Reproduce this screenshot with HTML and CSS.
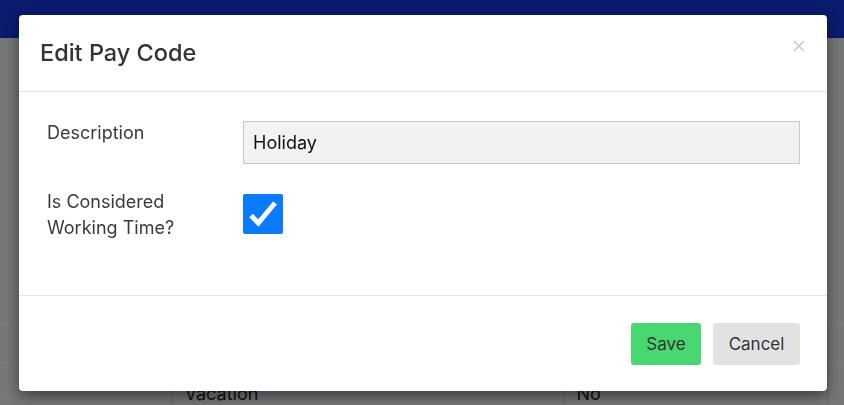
FILE: index.html
```html
<!DOCTYPE html>
<html lang="en">
<head>
    <meta charset="UTF-8">
    <meta name="viewport" content="width=device-width, initial-scale=1.0">
    <title>Pay Codes</title>
    <link rel="stylesheet" href="styles.css">
</head>
<body>
    <div class="topbar"></div>

    <div class="page">
        <table class="codes-table">
            <colgroup>
                <col class="col-spacer">
                <col class="col-name">
                <col class="col-working">
                <col>
            </colgroup>
            <tbody>
                <tr><td></td><td>Holiday</td><td>Yes</td><td></td></tr>
                <tr class="last-row"><td></td><td>Vacation</td><td>No</td><td></td></tr>
            </tbody>
        </table>
    </div>

    <div class="backdrop">
        <div class="modal">
            <div class="modal-header">
                <h2>Edit Pay Code</h2>
                <button class="close-btn" aria-label="Close">
                    <svg width="12" height="12" viewBox="0 0 12 12">
                        <path d="M1 1 L11 11 M11 1 L1 11" stroke="#c9c9c9" stroke-width="1.6" fill="none"/>
                    </svg>
                </button>
            </div>

            <div class="modal-body">
                <div class="form-row">
                    <label for="description">Description</label>
                    <input type="text" id="description" class="text-input" value="Holiday">
                </div>
                <div class="form-row">
                    <label>Is Considered<br>Working Time?</label>
                    <span class="checkbox checked">
                        <svg width="40" height="40" viewBox="0 0 40 40">
                            <path d="M8 21.5 L15.3 29 L32 9" stroke="#fff" stroke-width="5" fill="none"/>
                        </svg>
                    </span>
                </div>
            </div>

            <div class="modal-footer">
                <button class="btn btn-save">Save</button>
                <button class="btn btn-cancel">Cancel</button>
            </div>
        </div>
    </div>
</body>
</html>
```

FILE: styles.css
```css
* {
    margin: 0;
    padding: 0;
    box-sizing: border-box;
    font-family: Inter, Roboto, "Liberation Sans", sans-serif;
}

body {
    background-color: #efefef;
    height: 405px;
    overflow: hidden;
}

.topbar {
    height: 38px;
    background-color: #1636dc;
}

.page {
    padding-top: 285px;
}

.codes-table {
    width: 100%;
    table-layout: fixed;
    border-collapse: collapse;
    font-size: 18px;
    color: #222;
}

.col-spacer {
    width: 171px;
}

.col-name {
    width: 392px;
}

.col-working {
    width: 264px;
}

.codes-table td {
    height: 39px;
    padding: 0 13px;
    border-top: 1px solid #ffffff;
    border-left: 1px solid #cfcfcf;
    vertical-align: middle;
}

.codes-table td:first-child {
    border-left: none;
}

.codes-table .last-row td {
    vertical-align: top;
    padding-top: 20px;
    height: 60px;
}

.backdrop {
    position: fixed;
    inset: 0;
    background-color: rgba(0, 0, 0, 0.5);
    padding-top: 15px;
}

.modal {
    width: 808px;
    margin-left: 19px;
    background-color: #fff;
    border-radius: 4px;
    box-shadow: 0 5px 15px rgba(0, 0, 0, 0.5);
}

.modal-header {
    height: 77px;
    padding: 0 21px;
    display: flex;
    align-items: center;
    justify-content: space-between;
    border-bottom: 1px solid #e5e5e5;
}

.modal-header h2 {
    font-size: 23.5px;
    font-weight: 500;
    color: #333;
    padding-bottom: 1px;
}

.close-btn {
    border: none;
    background: none;
    cursor: pointer;
    margin-right: 1px;
    margin-bottom: 15px;
    display: flex;
}

.modal-body {
    padding: 29px 27px 22px 28px;
    height: 204px;
    border-bottom: 1px solid #e5e5e5;
}

.form-row {
    display: flex;
    align-items: flex-start;
    margin-bottom: 30px;
}

.form-row label {
    width: 196px;
    flex-shrink: 0;
    font-size: 18px;
    line-height: 26px;
    color: #3a3a3a;
}

.form-row:first-child label {
    margin-top: -1px;
}

.form-row:last-child label {
    margin-top: -5px;
}

.text-input {
    flex: 1;
    height: 43px;
    padding: 0 9px;
    font-size: 18px;
    color: #111;
    background-color: #f2f2f2;
    border: 1px solid #c8c8c8;
    border-radius: 0;
    outline: none;
}

.checkbox {
    width: 40px;
    height: 40px;
    border-radius: 2px;
    display: flex;
}

.checkbox.checked {
    background-color: #0a7bff;
}

.modal-footer {
    display: flex;
    justify-content: flex-end;
    gap: 12px;
    padding: 27px 27px 26px;
}

.btn {
    height: 42px;
    border: none;
    border-radius: 3px;
    font-size: 17px;
    color: #333;
    cursor: pointer;
}

.btn-save {
    width: 70px;
    background-color: #47d86f;
}

.btn-cancel {
    width: 87px;
    background-color: #e2e2e2;
}
```
